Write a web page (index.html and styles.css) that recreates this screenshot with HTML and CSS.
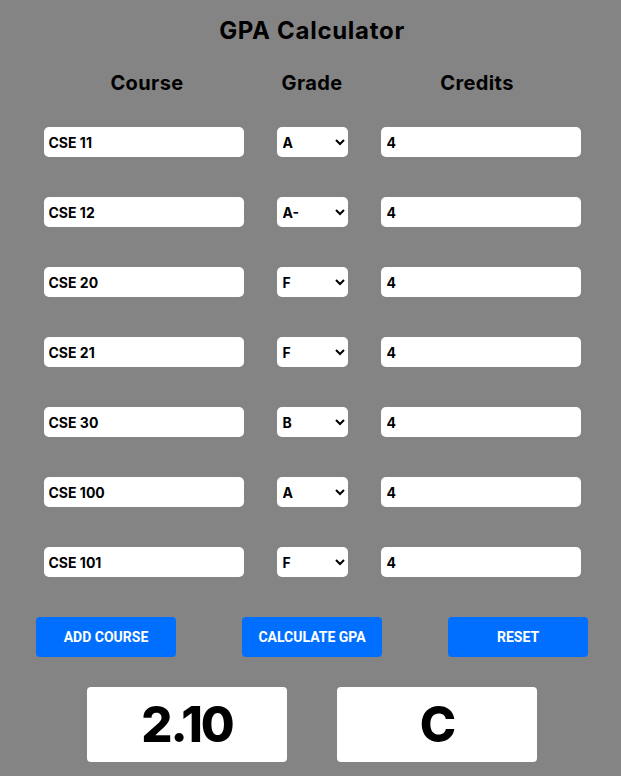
FILE: index.html
```html
<!DOCTYPE html>
<html lang="en">
<head>
<meta charset="utf-8">
<title>GPA Calculator</title>
<link rel="stylesheet" href="styles.css">
</head>
<body>
<main class="app">
  <h1 class="title">GPA Calculator</h1>
  <div class="heads">
    <div class="head">Course</div>
    <div class="head">Grade</div>
    <div class="head">Credits</div>
  </div>
  <div class="rows">
    <div class="row">
      <input class="field" type="text" value="CSE 11">
      <select class="grade"><option selected>A</option><option>A-</option><option>B</option><option>F</option></select>
      <input class="field credits" type="text" value="4">
    </div>
    <div class="row">
      <input class="field" type="text" value="CSE 12">
      <select class="grade"><option>A</option><option selected>A-</option><option>B</option><option>F</option></select>
      <input class="field credits" type="text" value="4">
    </div>
    <div class="row">
      <input class="field" type="text" value="CSE 20">
      <select class="grade"><option>A</option><option>A-</option><option>B</option><option selected>F</option></select>
      <input class="field credits" type="text" value="4">
    </div>
    <div class="row">
      <input class="field" type="text" value="CSE 21">
      <select class="grade"><option>A</option><option>A-</option><option>B</option><option selected>F</option></select>
      <input class="field credits" type="text" value="4">
    </div>
    <div class="row">
      <input class="field" type="text" value="CSE 30">
      <select class="grade"><option>A</option><option>A-</option><option selected>B</option><option>F</option></select>
      <input class="field credits" type="text" value="4">
    </div>
    <div class="row">
      <input class="field" type="text" value="CSE 100">
      <select class="grade"><option selected>A</option><option>A-</option><option>B</option><option>F</option></select>
      <input class="field credits" type="text" value="4">
    </div>
    <div class="row">
      <input class="field" type="text" value="CSE 101">
      <select class="grade"><option>A</option><option>A-</option><option>B</option><option selected>F</option></select>
      <input class="field credits" type="text" value="4">
    </div>
  </div>
  <div class="actions">
    <button class="btn">ADD COURSE</button>
    <button class="btn">CALCULATE GPA</button>
    <button class="btn">RESET</button>
  </div>
  <div class="results">
    <div class="result">2.10</div>
    <div class="result">C</div>
  </div>
</main>
</body>
</html>
```

FILE: styles.css
```css
html, body {
  margin: 0;
  padding: 0;
  background: #848484;
}
body {
  font-family: Inter, "Noto Sans", sans-serif;
  color: #000;
}
.app {
  width: 621px;
  padding-left: 3px;
  box-sizing: border-box;
  display: flex;
  flex-direction: column;
  align-items: center;
}
.title {
  margin: 16px 0 0;
  font-size: 24px;
  font-weight: 700;
  letter-spacing: 0.7px;
  line-height: 30px;
}
.heads {
  margin-top: 25px;
  display: grid;
  grid-template-columns: 165px 165px 165px;
  text-align: center;
}
.head {
  font-size: 20px;
  font-weight: 700;
  letter-spacing: 0.4px;
  line-height: 24px;
}
.rows {
  margin-top: 32px;
  display: flex;
  flex-direction: column;
  gap: 40px;
}
.row {
  display: grid;
  grid-template-columns: 200px 71px 200px;
  column-gap: 33px;
}
.field, .grade {
  height: 30px;
  border: none;
  border-radius: 5px;
  background: #fff;
  font-family: inherit;
  font-size: 14px;
  font-weight: 700;
  color: #000;
  box-sizing: border-box;
  outline: none;
  margin: 0;
}
.field {
  padding: 0 5px;
}
.credits {
  padding: 0 6px;
}
.grade {
  padding: 0 2px;
}
.actions {
  margin-top: 40px;
  display: flex;
  gap: 66px;
}
.btn {
  width: 140px;
  height: 40px;
  border: none;
  border-radius: 4px;
  background: #006fff;
  color: #fff;
  font-family: Roboto, "Liberation Sans", sans-serif;
  font-size: 14px;
  font-weight: 700;
  padding: 0;
}
.results {
  margin-top: 30px;
  display: flex;
  gap: 50px;
}
.result {
  width: 200px;
  height: 75px;
  background: #fff;
  border-radius: 4px;
  display: flex;
  align-items: center;
  justify-content: center;
  font-size: 49px;
  font-weight: 800;
  letter-spacing: -2px;
}
```
